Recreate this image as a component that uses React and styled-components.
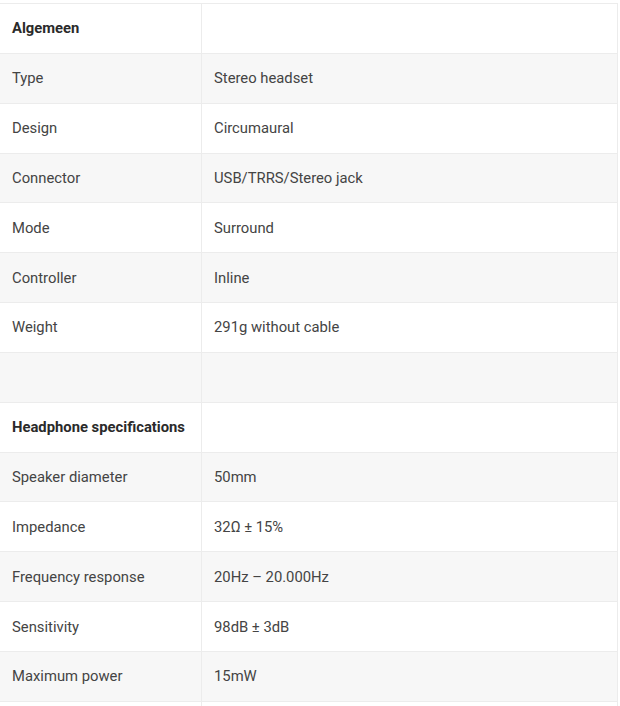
import React from 'react';
import styled, {createGlobalStyle} from 'styled-components';

const GlobalStyle = createGlobalStyle`
  body {
    margin: 0;
    padding-top: 3px;
    background: #fff;
    font-family: Roboto, "Liberation Sans", sans-serif;
  }
`;

const Table = styled.table`
  width: 619px;
  margin-left: -1px;
  border-collapse: collapse;
  font-size: 14.8px;
  color: #444;
`;

const Row = styled.tr`
  height: 49.85px;
  background: ${p => p.$shade ? '#f7f7f7' : '#fff'};
`;

const Cell = styled.td`
  border: 1px solid #ececec;
  padding: 0 12px;
  vertical-align: middle;
  font-weight: ${p => p.$bold ? 700 : 400};
  color: ${p => p.$bold ? '#2a2a2a' : 'inherit'};
  width: ${p => p.$first ? '177px' : 'auto'};
`;

const rows = [
    {label: 'Algemeen', head: true},
    {label: 'Type', value: 'Stereo headset'},
    {label: 'Design', value: 'Circumaural'},
    {label: 'Connector', value: 'USB/TRRS/Stereo jack'},
    {label: 'Mode', value: 'Surround'},
    {label: 'Controller', value: 'Inline'},
    {label: 'Weight', value: '291g without cable'},
    {label: '', value: ''},
    {label: 'Headphone specifications', head: true},
    {label: 'Speaker diameter', value: '50mm'},
    {label: 'Impedance', value: '32Ω ± 15%'},
    {label: 'Frequency response', value: '20Hz – 20.000Hz'},
    {label: 'Sensitivity', value: '98dB ± 3dB'},
    {label: 'Maximum power', value: '15mW'},
    {label: '', value: ''},
];

export default function App() {
    return (
        <>
            <GlobalStyle/>
            <Table>
                <tbody>
                {rows.map((row, i) => (
                    <Row key={i} $shade={i % 2 === 1}>
                        <Cell $first $bold={row.head}>{row.label}</Cell>
                        <Cell>{row.value}</Cell>
                    </Row>
                ))}
                </tbody>
            </Table>
        </>
    );
}
